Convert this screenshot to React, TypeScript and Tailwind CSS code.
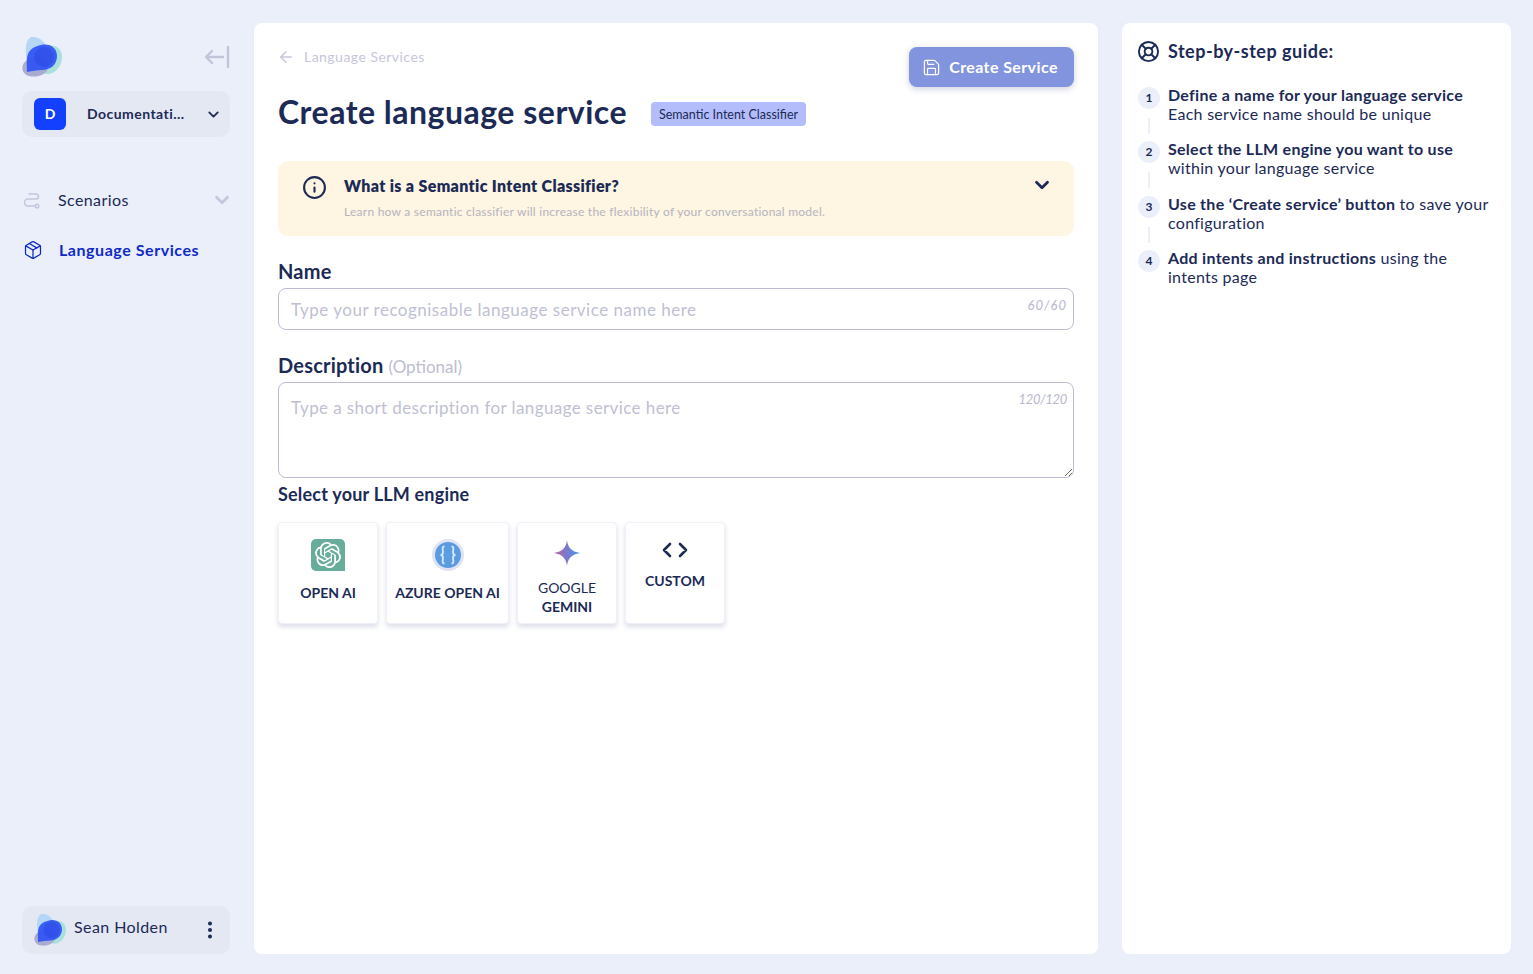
import { ArrowLeft, ChevronDown, EllipsisVertical, Info, LifeBuoy, Package, Save } from "lucide-react";
import { SiOpenai } from "react-icons/si";

const steps = [
  { n: "1", bold: "Define a name for your language service", rest: "", second: "Each service name should be unique" },
  { n: "2", bold: "Select the LLM engine you want to use", rest: "", second: "within your language service" },
  { n: "3", bold: "Use the ‘Create service’ button", rest: " to save your", second: "configuration" },
  { n: "4", bold: "Add intents and instructions", rest: " using the", second: "intents page" },
];

const Logo: React.FC<{ className: string }> = ({ className }) => (
  <svg viewBox="0 0 40 40" className={className}>
    <path d="M9 0C16-1 22 4 25 10L25 25 5 25C3 15 3 3 9 0z" fill="#b5d6f6" />
    <path d="M24 9C32 7 40 10 40 20 40 30 32 38 24 37 16 36 16 10 24 9z" fill="#abdfdc" />
    <path d="M12 20C20 16 26 22 26 30 26 38 14 41 7 39 0 37-1 30 2 26 4 23 8 21 12 20z" fill="#a9acd0" />
    <path d="M19 8C28 6 35 11 35 19 35 28 28 33 20 33 15 33 10 34 5 35 5 28 4 22 6 17 8 12 13 9 19 8z" fill="#2f52f5" fillOpacity="0.92" />
    <circle cx="22" cy="20" r="10" fill="#2a45e0" fillOpacity="0.45" />
  </svg>
);

const OpenAiIcon = () => (
  <div className="flex h-8 w-[34px] items-center justify-center rounded-l-[5px] rounded-tr-[5px] bg-[#68ad9b] text-white">
    <SiOpenai size={26} />
  </div>
);

const AzureIcon = () => (
  <svg viewBox="0 0 32 32" className="h-8 w-8">
    <circle cx="16" cy="16" r="16" fill="#dfe3f3" />
    <circle cx="16" cy="16" r="13" fill="#5b9be0" />
    <path d="M12.500 7.500c-3 0-1.500 3.500-1.500 5.500s-.6 3-2.500 3c1.900 0 2.500 1 2.500 3s-1.500 5.500 1.500 5.500M19.500 7.500c3 0 1.500 3.500 1.500 5.500s.6 3 2.500 3c-1.900 0-2.500 1-2.500 3s1.500 5.500-1.500 5.500" fill="none" stroke="#d8e8f8" strokeWidth="1.800" />
  </svg>
);

const GeminiIcon = () => (
  <svg viewBox="0 0 26 26" className="h-[26px] w-[26px]">
    <defs>
      <linearGradient id="gem" x1="0" y1="0.5" x2="1" y2="0.5">
        <stop offset="0" stopColor="#c0659c" />
        <stop offset="0.5" stopColor="#7a78d0" />
        <stop offset="1" stopColor="#3f9be8" />
      </linearGradient>
    </defs>
    <path d="M13 0c.8 7.500 4.500 11.500 13 13-8.500 1.500-12.200 5.500-13 13-.8-7.500-4.500-11.500-13-13 8.500-1.500 12.200-5.500 13-13z" fill="url(#gem)" />
  </svg>
);

const CustomIcon = () => (
  <svg viewBox="0 0 26 16" className="h-4 w-[26px]" fill="none" stroke="#1c2a56" strokeWidth="2.600" strokeLinecap="round" strokeLinejoin="round">
    <path d="M8 2L2 8l6 6M18 2l6 6-6 6" />
  </svg>
);

const ScenarioIcon = () => (
  <svg viewBox="0 0 18 18" className="h-[18px] w-[18px]" fill="none" stroke="#c5c6dc" strokeWidth="1.500" strokeLinecap="round">
    <path d="M7 3h7a2.500 2.500 0 0 1 0 5H6a3.500 3.500 0 0 0 0 7h7" />
    <circle cx="15" cy="15" r="1.800" />
  </svg>
);

const CollapseIcon = () => (
  <svg viewBox="0 0 26 22" className="h-[22px] w-[26px]" fill="none" stroke="#c3c4da" strokeWidth="2.400" strokeLinecap="round" strokeLinejoin="round">
    <path d="M24 1v20M19 11H2M8 5l-6 6 6 6" />
  </svg>
);

const engines = [
  { id: "openai", icon: <OpenAiIcon />, lines: ["OPEN AI"], w: "w-[100px]", pad: "pt-4", gap: "mt-3" },
  { id: "azure", icon: <AzureIcon />, lines: ["AZURE OPEN AI"], w: "w-[123px]", pad: "pt-4", gap: "mt-3" },
  { id: "gemini", icon: <GeminiIcon />, lines: ["GOOGLE", "GEMINI"], w: "w-[100px]", pad: "pt-[17px]", gap: "mt-3" },
  { id: "custom", icon: <CustomIcon />, lines: ["CUSTOM"], w: "w-[100px]", pad: "pt-[19px]", gap: "mt-[13px]" },
];

export default function App() {
  return (
    <div className="flex h-[974px] w-[1533px] overflow-hidden bg-[#ebeffa] pt-[23px] pb-5 pr-[22px] font-['Lato',sans-serif] text-[#1c2a56]">
      <aside className="flex w-[254px] shrink-0 flex-col pl-[22px] pr-6">
        <div className="flex h-[68px] items-start justify-between pt-[14px]">
          <Logo className="h-10 w-10" />
          <div className="pt-[9px] pl-[1px]"><CollapseIcon /></div>
        </div>
        <div className="flex h-[46px] items-center rounded-[10px] bg-[#e4e8f3] pl-3 pr-2">
          <div className="flex h-8 w-8 items-center justify-center rounded-md bg-[#1340ff] text-sm font-bold text-white">D</div>
          <span className="ml-[21px] flex-1 pb-[2px] text-[14px] font-bold tracking-[0.45px]">Documentati...</span>
          <ChevronDown size={17} strokeWidth={2.500} />
        </div>
        <nav className="mt-[52px] flex flex-col gap-[29px]">
          <div className="flex h-[21px] items-center">
            <ScenarioIcon />
            <span className="ml-[18px] flex-1 text-[16px] tracking-[0.4px]">Scenarios</span>
            <ChevronDown size={22} strokeWidth={3} className="-mr-[3px] text-[#c5c6dc]" />
          </div>
          <div className="flex h-[21px] items-center text-[#0f2bc4]">
            <Package size={20} strokeWidth={1.500} className="ml-[1px]" />
            <span className="ml-4 text-[16px] font-bold tracking-[0.55px]">Language Services</span>
          </div>
        </nav>
        <div className="mt-auto flex h-[48px] items-center rounded-[10px] bg-[#e4e8f3] pl-3 pr-[9px]">
          <Logo className="h-8 w-8" />
          <span className="ml-2 flex-1 pb-[7px] text-[16px] tracking-[0.42px]">Sean Holden</span>
          <EllipsisVertical size={22} strokeWidth={2.400} className="-mt-[1px]" />
        </div>
      </aside>

      <main className="w-[844px] shrink-0 rounded-lg bg-white px-6 pt-6">
        <div className="flex items-start justify-between">
          <div className="flex items-center text-[#c5c6dc]">
            <ArrowLeft size={18} strokeWidth={1.800} className="-ml-[1px]" />
            <span className="ml-[9px] text-[14px] leading-[20px] tracking-[0.47px]">Language Services</span>
          </div>
          <button className="flex h-10 w-[165px] items-center justify-center gap-2 rounded-lg bg-[#8294dd] pr-[3px] text-[16px] font-bold tracking-[0.4px] text-white shadow-[0_2px_6px_rgba(60,70,130,0.25)]">
            <Save size={19} strokeWidth={1.500} />
            Create Service
          </button>
        </div>
        <div className="mt-[2px] flex items-center">
          <h1 className="text-[32px] leading-[46px] font-bold tracking-[0.5px]">Create language service</h1>
          <span className="mt-[4px] ml-[24px] flex h-6 w-[155px] items-center justify-center rounded bg-[#b3bdfb] pt-[3px] text-[12.500px]">Semantic Intent Classifier</span>
        </div>
        <div className="mt-[26px] flex h-[75px] rounded-[10px] bg-[#fef5e2] pl-6 pr-[21px] pt-[13px]">
          <Info size={25} strokeWidth={2} className="mt-[1px] shrink-0" />
          <div className="ml-[17px] flex-1">
            <div className="text-[16px] leading-[23px] font-extrabold tracking-[0.34px]">What is a Semantic Intent Classifier?</div>
            <div className="mt-[6px] text-[12px] tracking-[0.25px] text-[#b4b4c0]">Learn how a semantic classifier will increase the flexibility of your conversational model.</div>
          </div>
          <ChevronDown size={22} strokeWidth={3} />
        </div>

        <label className="mt-[21px] block text-[20px] leading-[28px] font-bold tracking-[0.2px]">Name</label>
        <div className="relative mt-[3px]">
          <input
            placeholder="Type your recognisable language service name here"
            className="h-[42px] w-full rounded-lg border border-[#bdbcd4] px-3 text-[17px] tracking-[0.5px] outline-none placeholder:text-[#c0bfd4]"
          />
          <span className="absolute top-[8px] right-[7px] text-[13px] tracking-[1px] text-[#b8b8d0] italic">60/60</span>
        </div>

        <div className="mt-[21px] flex items-baseline gap-[5px]">
          <label className="text-[20px] leading-[28px] font-bold tracking-[0.2px]">Description</label>
          <span className="text-[17px] text-[#bdbdd2]">(Optional)</span>
        </div>
        <div className="relative mt-[2px]">
          <textarea
            placeholder="Type a short description for language service here"
            className="block h-[96px] w-full rounded-lg border border-[#bdbcd4] px-3 pt-[12px] text-[17px] tracking-[0.4px] outline-none placeholder:text-[#c0bfd4]"
          />
          <span className="absolute top-[8px] right-[7px] text-[13px] tracking-[-0.3px] text-[#b8b8d0] italic">120/120</span>
        </div>

        <div className="mt-[3px] text-[18px] leading-[26px] font-bold tracking-[0.2px]">Select your LLM engine</div>
        <div className="mt-[15px] flex gap-2">
          {engines.map((engine) => (
            <div
              key={engine.id}
              className={`flex h-[102px] flex-col items-center rounded border border-[#eef0fb] bg-white shadow-[0_3px_5px_rgba(60,70,130,0.18)] ${engine.w} ${engine.pad}`}
            >
              {engine.icon}
              <div className={`text-center text-[14px] leading-[19px] font-bold ${engine.gap}`}>
                {engine.lines.map((line) => (
                  <div key={line} className={line === "GOOGLE" ? "font-normal" : ""}>{line}</div>
                ))}
              </div>
            </div>
          ))}
        </div>
      </main>

      <section className="ml-6 flex-1 rounded-lg bg-white pl-4 pr-3 pt-[15px]">
        <div className="flex items-center gap-2">
          <LifeBuoy size={23} strokeWidth={2} className="-ml-[1px]" />
          <h2 className="text-[18px] leading-[26px] font-bold tracking-[0.5px]">Step-by-step guide:</h2>
        </div>
        <ol className="mt-[21px] flex flex-col">
          {steps.map((step, i) => (
            <li key={step.n} className="flex">
              <div className="flex w-[22px] shrink-0 flex-col items-center pt-[2px]">
                <span className="flex h-[22px] w-[22px] items-center justify-center rounded-full bg-[#ebeffa] text-[12px] font-bold">{step.n}</span>
                {i < steps.length - 1 && <span className="mt-[9px] h-4 w-[2px] bg-[#ebeffa]" />}
              </div>
              <div className="ml-2 pb-[16.330px] text-[16px] leading-[19px] tracking-[0.28px]">
                <div><strong className="font-bold">{step.bold}</strong>{step.rest}</div>
                <div>{step.second}</div>
              </div>
            </li>
          ))}
        </ol>
      </section>
    </div>
  );
}
